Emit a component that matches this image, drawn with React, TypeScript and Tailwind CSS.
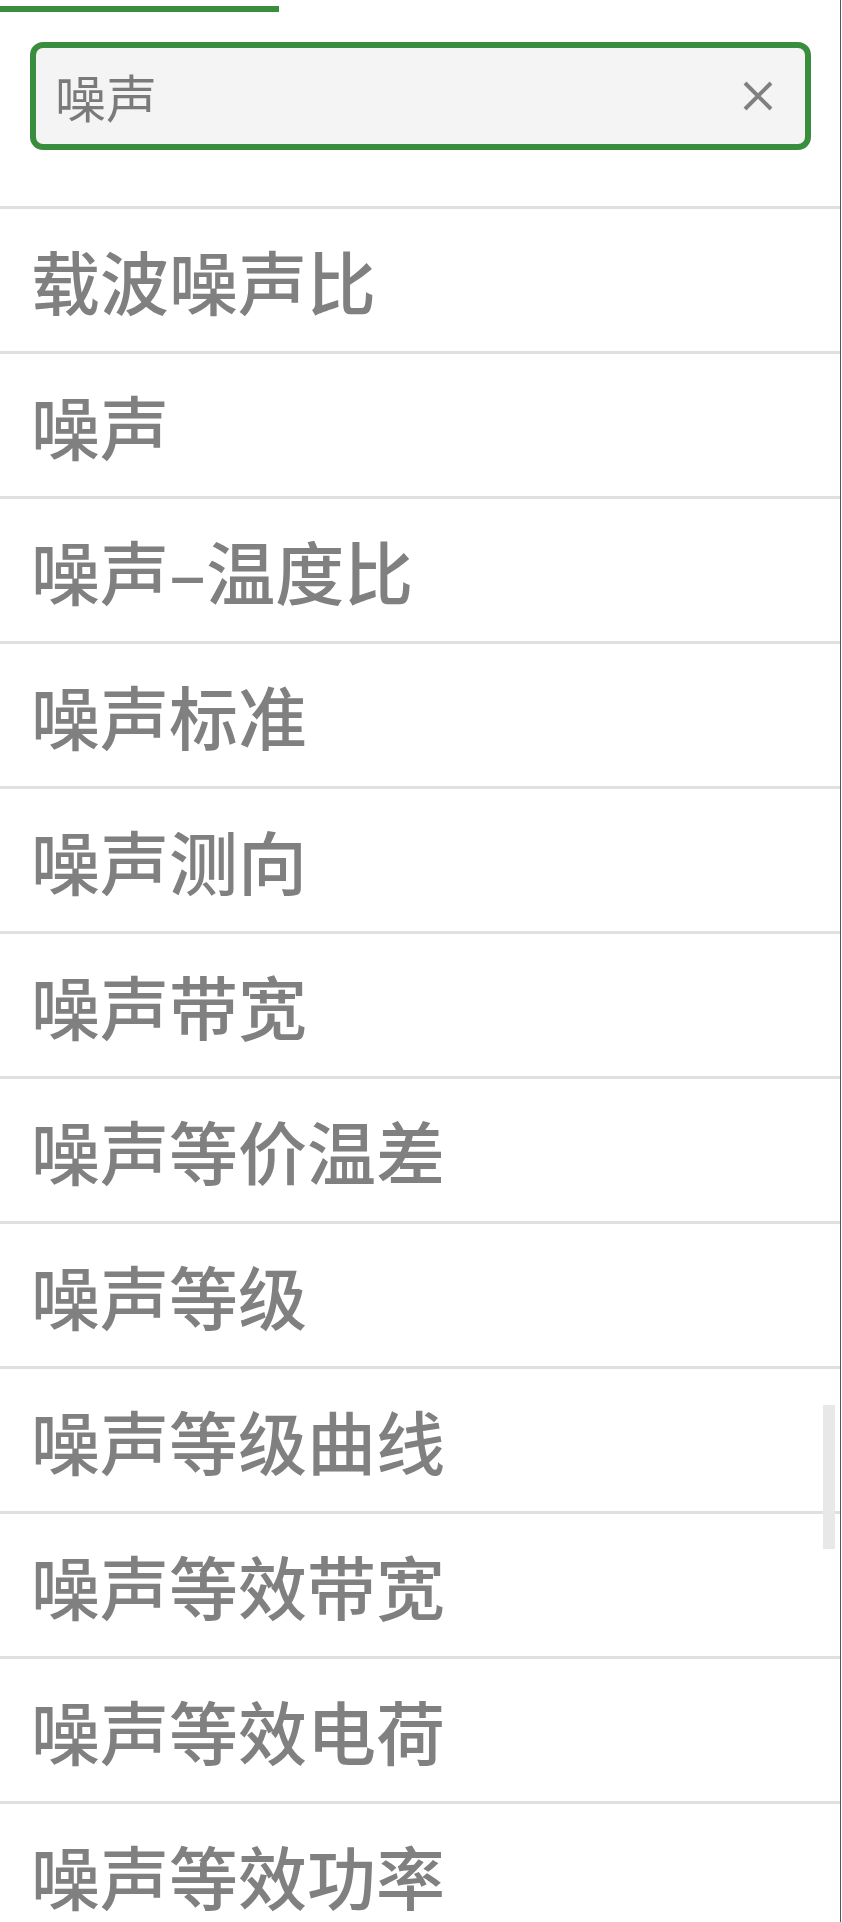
const items = [
  "载波噪声比",
  "噪声",
  "噪声–温度比",
  "噪声标准",
  "噪声测向",
  "噪声带宽",
  "噪声等价温差",
  "噪声等级",
  "噪声等级曲线",
  "噪声等效带宽",
  "噪声等效电荷",
  "噪声等效功率",
];

function ClearIcon() {
  return (
    <svg width="30" height="30" viewBox="0 0 30 30" className="shrink-0">
      <path d="M2 2 L28 28 M28 2 L2 28" stroke="#808080" strokeWidth="4" />
    </svg>
  );
}

export default function App() {
  return (
    <div
      className="relative w-[842px] h-[1922px] overflow-hidden bg-white"
      style={{ fontFamily: '"Noto Sans CJK SC", "Noto Sans", sans-serif' }}
    >
      <div className="mr-[1px] border-r border-[#555555] h-full">
        {/* active tab indicator */}
        <div className="pt-[6px]">
          <div className="h-[6px] w-[279px] bg-[#388e3c]" />
        </div>

        {/* search box */}
        <div className="mt-[30px] ml-[30px] mr-[29px] h-[108px] flex items-center rounded-[13px] border-[6px] border-[#388e3c] bg-[#f4f4f4] pl-[19px] pr-[32px]">
          <span className="flex-1 text-[51px] leading-none text-[#7a7a7a]">噪声</span>
          <ClearIcon />
        </div>

        {/* results */}
        <div className="mt-[56px]">
          {items.map((t) => (
            <div
              key={t}
              className="h-[145px] border-t-[3px] border-[#e0e0e0] flex items-center pl-[31px]"
            >
              <span className="text-[69px] leading-none font-medium text-[#808080] whitespace-nowrap">
                {t}
              </span>
            </div>
          ))}
        </div>
      </div>

      {/* scrollbar thumb */}
      <div className="absolute left-[823px] top-[1405px] w-[12px] h-[144px] bg-[#e8e8e8]" />
    </div>
  );
}
